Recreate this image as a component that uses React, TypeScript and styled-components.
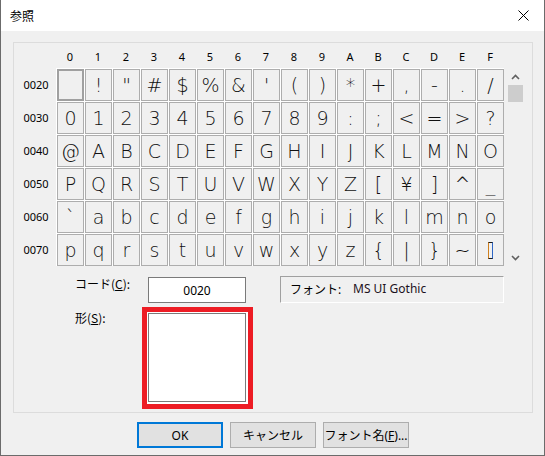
import styled, { createGlobalStyle } from "styled-components";

const GlobalStyle = createGlobalStyle`
  html, body {
    margin: 0;
    padding: 0;
    width: 545px;
    height: 456px;
    overflow: hidden;
    background: #f0f0f0;
  }
  * {
    box-sizing: border-box;
  }
`;

const UI_FONT = `"Noto Sans", "Noto Sans CJK JP", sans-serif`;

const headers = "0123456789ABCDEF".split("");
const rowCodes = ["0020", "0030", "0040", "0050", "0060", "0070"];

const glyphFor = (code: number) => {
  if (code === 0x5c) return "¥";
  if (code === 0x20) return "";
  return String.fromCharCode(code);
};

const App = () => {
  const cells: number[] = [];
  for (let c = 0x20; c < 0x80; c++) cells.push(c);

  return (
    <>
      <GlobalStyle />
      <Window>
        <TitleBar>
          <Title>参照</Title>
          <CloseBtn>
            <svg width="11" height="11" viewBox="0 0 11 11">
              <path d="M0.5 0.5 L10.5 10.5 M10.5 0.5 L0.5 10.5" stroke="#000" strokeWidth="1" fill="none" />
            </svg>
          </CloseBtn>
        </TitleBar>

        <Body>
          <GroupBox>
            <MapArea>
              <HeaderRow>
                {headers.map((h) => (
                  <ColHeader key={h}>{h}</ColHeader>
                ))}
              </HeaderRow>
              <RowLabels>
                {rowCodes.map((r) => (
                  <RowLabel key={r}>{r}</RowLabel>
                ))}
              </RowLabels>
              <CellGrid>
                {cells.map((code) => (
                  <Cell key={code} selected={code === 0x20}>
                    {code === 0x7f ? <DelGlyph /> : glyphFor(code)}
                  </Cell>
                ))}
              </CellGrid>
              <ScrollBar>
                <ArrowBtn>
                  <svg width="9" height="6" viewBox="0 0 9 6">
                    <path d="M1 5 L4.5 1.5 L8 5" stroke="#606060" strokeWidth="1.6" fill="none" />
                  </svg>
                </ArrowBtn>
                <Thumb />
                <Track />
                <ArrowBtn>
                  <svg width="9" height="6" viewBox="0 0 9 6">
                    <path d="M1 1 L4.5 4.5 L8 1" stroke="#606060" strokeWidth="1.6" fill="none" />
                  </svg>
                </ArrowBtn>
              </ScrollBar>
            </MapArea>

            <DetailRow>
              <FieldLabel width={73}>
                コード(<u>C</u>):
              </FieldLabel>
              <CodeInput>0020</CodeInput>
              <FontBox>
                <FontKey>フォント:</FontKey>
                <FontName>MS UI Gothic</FontName>
              </FontBox>
            </DetailRow>

            <ShapeRow>
              <FieldLabel width={67} top={3}>
                形(<u>S</u>):
              </FieldLabel>
              <Highlight>
                <Preview />
              </Highlight>
            </ShapeRow>
          </GroupBox>

          <ButtonBar>
            <Button primary>OK</Button>
            <Button>キャンセル</Button>
            <Button>
              フォント名(<u>F</u>)...
            </Button>
          </ButtonBar>
        </Body>
      </Window>
    </>
  );
};

const Window = styled.div`
  width: 545px;
  height: 456px;
  display: flex;
  flex-direction: column;
  background: #f0f0f0;
  border-left: 1px solid #6b6b6b;
  border-right: 1px solid #6b6b6b;
  border-bottom: 1px solid #6b6b6b;
  font-family: ${UI_FONT};
  color: #000;
`;

const TitleBar = styled.div`
  height: 31px;
  flex-shrink: 0;
  background: #fff;
  display: flex;
  align-items: center;
  justify-content: space-between;
  padding-left: 9px;
`;

const Title = styled.span`
  font-family: "Noto Sans CJK JP", sans-serif;
  font-size: 12px;
`;

const CloseBtn = styled.div`
  width: 42px;
  height: 31px;
  display: flex;
  align-items: center;
  justify-content: center;
`;

const Body = styled.div`
  flex: 1;
  padding: 11px 11px 0 12px;
  display: flex;
  flex-direction: column;
`;

const GroupBox = styled.div`
  width: 520px;
  height: 371px;
  border: 1px solid #dcdcdc;
  padding: 0 0 3px 0;
  display: flex;
  flex-direction: column;
`;

const MapArea = styled.div`
  display: grid;
  grid-template-columns: 42px 448px 20px;
  grid-template-rows: 25px 198px;
`;

const HeaderRow = styled.div`
  grid-column: 2;
  grid-row: 1;
  display: grid;
  grid-template-columns: repeat(16, 28px);
  align-items: end;
`;

const ColHeader = styled.div`
  font-size: 11px;
  line-height: 14px;
  text-align: center;
  padding-bottom: 4px;
`;

const RowLabels = styled.div`
  grid-column: 1;
  grid-row: 2;
  display: grid;
  grid-template-rows: repeat(6, 33px);
`;

const RowLabel = styled.div`
  font-size: 11px;
  display: flex;
  align-items: center;
  justify-content: center;
  padding-left: 2px;
`;

const CellGrid = styled.div`
  grid-column: 2;
  grid-row: 2;
  display: grid;
  grid-template-columns: repeat(16, 27px);
  grid-auto-rows: 32px;
  gap: 1px;
  padding: 1px 0 0 1px;
  background: #fff;
`;

const Cell = styled.div<{ selected?: boolean }>`
  background: #f0f0f0;
  border: ${(p) => (p.selected ? "2px solid #a0a0a0" : "1px solid #adadad")};
  display: flex;
  align-items: center;
  justify-content: center;
  font-family: "DejaVu Sans", sans-serif;
  font-weight: 200;
  font-size: 19px;
  line-height: 1;
  padding-top: 1px;
  color: #111;
`;

const DelGlyph = styled.span`
  display: block;
  width: 5px;
  height: 17px;
  border: 1px solid #1a1a1a;
  border-left-color: #d0801e;
  border-right-color: #2e66c4;
`;

const ScrollBar = styled.div`
  grid-column: 3;
  grid-row: 2;
  justify-self: end;
  width: 17px;
  display: flex;
  flex-direction: column;
  align-items: center;
`;

const ArrowBtn = styled.div`
  width: 17px;
  height: 17px;
  display: flex;
  align-items: center;
  justify-content: center;
`;

const Thumb = styled.div`
  width: 15px;
  height: 17px;
  background: #cdcdcd;
`;

const Track = styled.div`
  flex: 1;
`;

const DetailRow = styled.div`
  display: flex;
  align-items: flex-start;
  margin-top: 10px;
  padding-left: 61px;
`;

const ShapeRow = styled.div`
  display: flex;
  align-items: flex-start;
  margin-top: 4px;
  padding-left: 61px;
`;

const FieldLabel = styled.div<{ width: number; top?: number }>`
  width: ${(p) => p.width}px;
  padding-top: ${(p) => p.top ?? 0}px;
  font-family: "Noto Sans CJK JP", sans-serif;
  font-size: 12px;
  line-height: 16px;
  white-space: nowrap;

  u {
    text-underline-offset: 1px;
  }
`;

const CodeInput = styled.div`
  width: 98px;
  height: 26px;
  margin-top: 1px;
  background: #fff;
  border: 1px solid #7a7a7a;
  display: flex;
  align-items: center;
  justify-content: center;
  font-size: 12px;
`;

const FontBox = styled.div`
  width: 224px;
  height: 27px;
  margin-left: 34px;
  border-top: 1px solid #a0a0a0;
  border-left: 1px solid #a0a0a0;
  border-bottom: 1px solid #fff;
  border-right: 1px solid #fff;
  display: flex;
  align-items: center;
  padding: 0 0 2px 9px;
  font-size: 12px;
`;

const FontKey = styled.span`
  width: 63px;
`;

const FontName = styled.span`
  color: #1c1020;
`;

const Highlight = styled.div`
  width: 111px;
  height: 102px;
  border: 5px solid #ed1c24;
  background: #fff;
  padding: 1px 2px 2px 1px;
`;

const Preview = styled.div`
  width: 100%;
  height: 100%;
  border: 1px solid #7a7a7a;
  background: #fff;
`;

const ButtonBar = styled.div`
  display: flex;
  justify-content: center;
  gap: 7px;
  margin-top: 9px;
`;

const Button = styled.div<{ primary?: boolean }>`
  width: 86px;
  height: 26px;
  background: #e1e1e1;
  border: ${(p) => (p.primary ? "2px solid #0078d7" : "1px solid #adadad")};
  display: flex;
  align-items: center;
  justify-content: center;
  font-size: 12px;
  white-space: nowrap;
`;

export default App;
